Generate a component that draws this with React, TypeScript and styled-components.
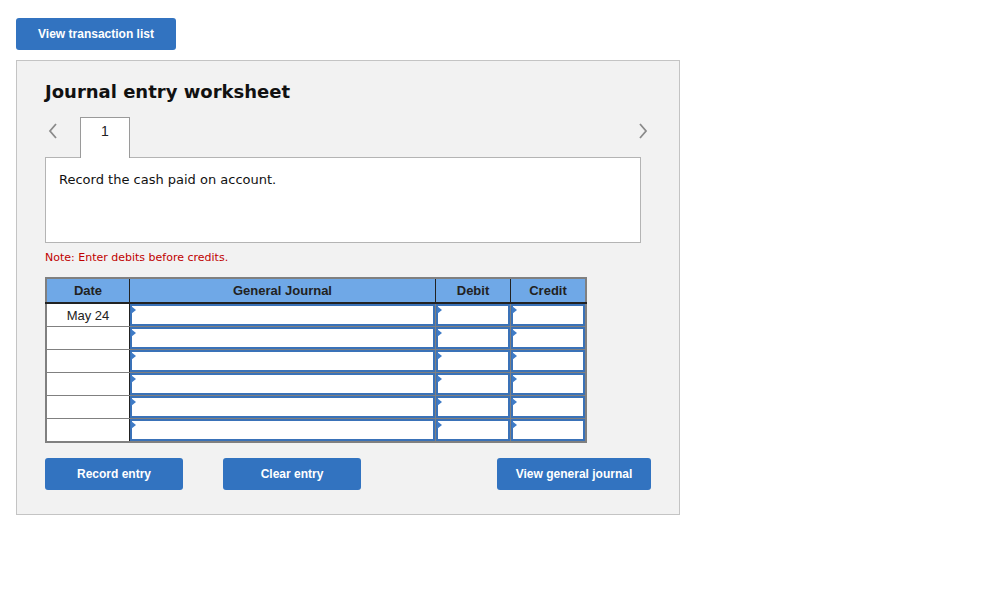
import styled, {createGlobalStyle} from 'styled-components';

const GlobalStyle = createGlobalStyle`
  body {
    margin: 0;
    background: #fff;
    font-family: 'DejaVu Sans', Verdana, sans-serif;
  }
`;

const Page = styled.div`
  padding: 18px 16px;
  width: 664px;
`;

const Button = styled.button<{w: number}>`
  width: ${(p) => p.w}px;
  height: 32px;
  background: #3273c0;
  color: #fff;
  border: none;
  border-radius: 3px;
  font-family: 'Liberation Sans', Arial, sans-serif;
  font-weight: bold;
  font-size: 12px;
  padding: 0;
  cursor: pointer;
`;

const Panel = styled.div`
  margin-top: 10px;
  border: 1px solid #c4c4c4;
  background: #f2f2f2;
  padding: 18px 38px 24px 28px;
  box-sizing: border-box;
  height: 455px;
`;

const Title = styled.h2`
  margin: 0 0 12px 0;
  font-size: 18px;
  font-weight: bold;
  color: #111;
  line-height: 26px;
`;

const TabRow = styled.div`
  display: flex;
  align-items: flex-end;
  height: 40px;
  width: 603px;
`;

const Chevron = styled.span<{side: 'left' | 'right'}>`
  align-self: flex-start;
  box-sizing: border-box;
  width: 35px;
  display: flex;
  justify-content: ${(p) => (p.side === 'left' ? 'flex-start' : 'flex-end')};
  margin-left: ${(p) => (p.side === 'right' ? 'auto' : '0')};
  padding-left: ${(p) => (p.side === 'left' ? '3px' : '0')};
  padding-top: 5px;
`;

const Tab = styled.div`
  width: 50px;
  height: 41px;
  box-sizing: border-box;
  background: #fff;
  border: 1px solid #9a9a9a;
  border-bottom: none;
  margin-bottom: -1px;
  position: relative;
  z-index: 1;
  text-align: center;
  font-family: 'Liberation Sans', Arial, sans-serif;
  font-size: 14px;
  line-height: 26px;
  color: #222;
`;

const Prompt = styled.div`
  width: 596px;
  height: 86px;
  box-sizing: border-box;
  background: #fff;
  border: 1px solid #b4b4b4;
  padding: 14px 13px;
  font-size: 13px;
  color: #111;
`;

const Note = styled.div`
  margin: 8px 0 13px;
  font-size: 11px;
  color: #c00000;
`;

const Table = styled.table`
  border-collapse: collapse;
  border: 2px solid #808080;
  font-family: 'Liberation Sans', Arial, sans-serif;
  table-layout: fixed;
  width: 535px;
`;

const Th = styled.th<{w: number}>`
  width: ${(p) => p.w}px;
  height: 23px;
  padding: 0;
  background: #6fa8e7;
  font-size: 13px;
  font-weight: bold;
  color: #222;
  border-left: 1px solid #222;
  border-bottom: 2px solid #222;
  &:first-child {
    border-left: none;
  }
`;

const DateCell = styled.td`
  height: 22px;
  padding: 0;
  background: #fff;
  border: 1px solid #808080;
  border-right: 1px solid #222;
  text-align: center;
  font-size: 13px;
  color: #222;
`;

const InputCell = styled.td`
  padding: 0;
  border: 1px solid #808080;
  height: 22px;
`;

const Field = styled.div`
  position: relative;
  height: 22px;
  box-sizing: border-box;
  border: 2px solid #3a72b8;
  background: #fff;
  &::before {
    content: '';
    position: absolute;
    left: -1px;
    top: 0;
    border-top: 4px solid transparent;
    border-bottom: 4px solid transparent;
    border-left: 5px solid #3f7bc6;
  }
`;

const Actions = styled.div`
  display: flex;
  margin-top: 15px;
  width: 606px;
  gap: 40px;
`;

const Spacer = styled.div`
  flex: 1;
`;

const rows = ['May 24', '', '', '', '', ''];

export default function App() {
  return (
    <Page>
      <GlobalStyle />
      <Button w={160}>View transaction list</Button>
      <Panel>
        <Title>Journal entry worksheet</Title>
        <TabRow>
          <Chevron side="left">
            <svg width="10" height="18" viewBox="0 0 10 18">
              <path d="M8 2 L2 9 L8 16" fill="none" stroke="#8a8a8a" strokeWidth="1.8" />
            </svg>
          </Chevron>
          <Tab>1</Tab>
          <Chevron side="right">
            <svg width="10" height="18" viewBox="0 0 10 18">
              <path d="M2 2 L8 9 L2 16" fill="none" stroke="#8a8a8a" strokeWidth="1.8" />
            </svg>
          </Chevron>
        </TabRow>
        <Prompt>Record the cash paid on account.</Prompt>
        <Note>Note: Enter debits before credits.</Note>
        <Table>
          <thead>
            <tr>
              <Th w={82}>Date</Th>
              <Th w={305}>General Journal</Th>
              <Th w={74}>Debit</Th>
              <Th w={74}>Credit</Th>
            </tr>
          </thead>
          <tbody>
            {rows.map((d, i) => (
              <tr key={i}>
                <DateCell>{d}</DateCell>
                <InputCell><Field /></InputCell>
                <InputCell><Field /></InputCell>
                <InputCell><Field /></InputCell>
              </tr>
            ))}
          </tbody>
        </Table>
        <Actions>
          <Button w={138}>Record entry</Button>
          <Button w={138}>Clear entry</Button>
          <Spacer />
          <Button w={154}>View general journal</Button>
        </Actions>
      </Panel>
    </Page>
  );
}
